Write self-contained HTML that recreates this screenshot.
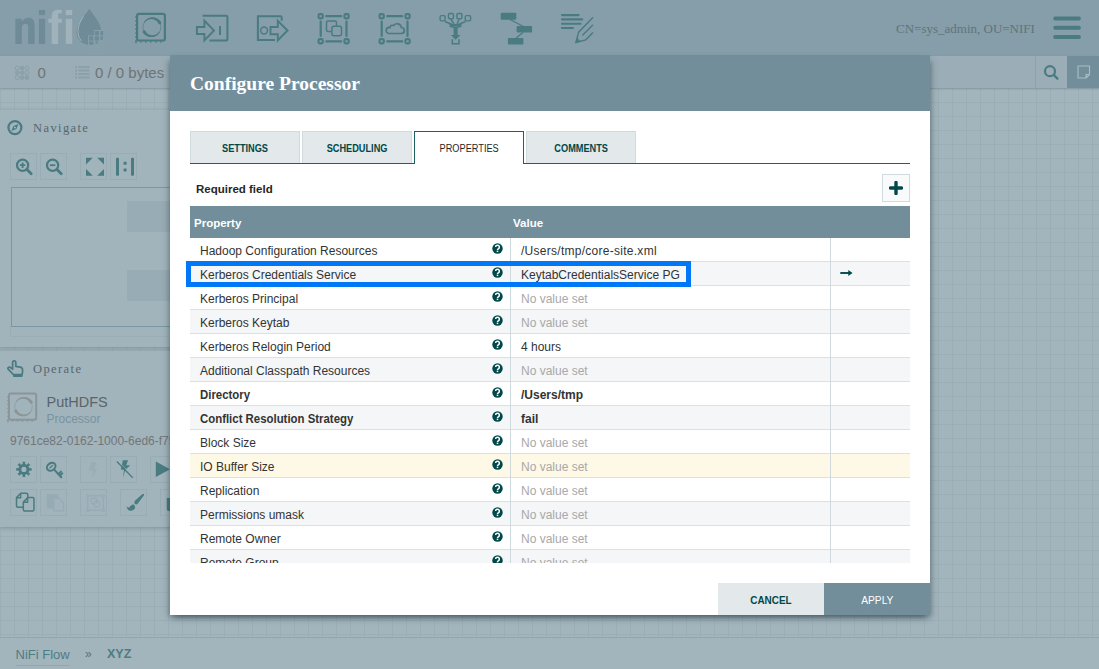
<!DOCTYPE html>
<html><head><meta charset="utf-8">
<style>
*{box-sizing:border-box;margin:0;padding:0}
html,body{width:1099px;height:669px;overflow:hidden}
body{position:relative;background:#a2b4bc;font-family:"Liberation Sans",sans-serif;color:#262626}
.abs{position:absolute}
#canvas{left:0;top:88px;width:1099px;height:549px;
 background-color:#a2b4bc;
 background-image:linear-gradient(to right,#9badb5 1px,transparent 1px),linear-gradient(to bottom,#9badb5 1px,transparent 1px);
 background-size:14px 14px;background-position:0 0}
#hdr{left:0;top:0;width:1099px;height:56px;background:#869ea9}
#tb{left:0;top:56px;width:1099px;height:32px;background:#9badb6;box-shadow:0 1px 2px rgba(60,80,90,0.25)}
#footer{left:0;top:637px;width:1099px;height:32px;background:#a2b4bc;border-top:1px solid #90a5ae}
.panel{background:#a1b3bb;box-shadow:0 1px 4px rgba(50,70,80,0.3)}
#dlg{left:170px;top:55px;width:760px;height:560px;background:#fff;box-shadow:-3px 4px 6px -2px rgba(40,60,70,0.5),3px 4px 6px -2px rgba(40,60,70,0.5)}
#dlghd{left:0;top:0;width:760px;height:56px;background:#728e9b}
#dlgtitle{left:20px;top:18px;font-family:"Liberation Serif",serif;font-weight:700;font-size:19.5px;color:#fff;white-space:nowrap}
.tab{top:76px;width:110px;height:32px;background:#e3e8eb;border:1px solid #cfdbdc;border-bottom:none;font-size:10px;font-weight:700;color:#004849;text-align:center;line-height:32px;z-index:2}
.tab span{display:inline-block;transform:scaleX(.92);line-height:10px;position:relative;top:1px}
.tab.act{background:#fff;border:1px solid #1d6163;border-bottom:none;color:#262626;font-weight:400;height:33px}
#tabline{left:20px;top:108px;width:720px;height:1px;background:#1d6163}
#reqf{left:26px;top:128px;font-size:11.5px;font-weight:700;color:#262626}
#addbtn{left:712px;top:119px;width:28px;height:28px;background:#f9fafb;border:1px solid #cfdbdc}
#thead{left:20px;top:151px;width:720px;height:32px;background:#728e9b;color:#fff;font-weight:700;font-size:11.5px}
#rows{left:20px;top:183px;width:720px;height:325px;overflow:hidden}
.row{position:relative;height:24px;border-bottom:1px solid #d9e1e5;font-size:12px;white-space:nowrap;color:#333}
.row.alt{background:#f4f6f7}
.row.warn{background:#fef9e6}
.row .n{position:absolute;left:10px;top:6px}
.row .v{position:absolute;left:331px;top:6px}
.row .nv{color:#a8a8a8}
.row .q{position:absolute;left:302px;top:5px;width:11px;height:11px}
.row .s1{position:absolute;left:320px;top:0;width:1px;height:24px;background:#cfd9de}
.row .s2{position:absolute;left:640px;top:0;width:1px;height:24px;background:#cfd9de}
.b{font-weight:700}
#btnc{left:548px;top:528px;width:106px;height:32px;background:#e3e8eb;color:#004849;font-weight:700;font-size:11px;text-align:center;line-height:34px}
#btnc span,#btna span{display:inline-block;transform:scaleX(.9)}
#btna{left:654px;top:528px;width:106px;height:32px;background:#728e9b;color:#fff;font-size:11px;text-align:center;line-height:34px}
#hl{left:186px;top:261px;width:505px;height:26px;border:5px solid #0077f7}
.ic{stroke:#497b81;fill:none}
.icf{fill:#497b81}
.pbtn{width:27px;height:27px;border:1px solid #98acb4}
</style></head><body>
<div id="canvas" class="abs"></div>
<div id="hdr" class="abs">
<svg class="abs" style="left:0;top:0" width="1099" height="55" viewBox="0 0 1099 55">
 <!-- logo -->
 <g fill="#6e8b97">
  <path d="M15.4 18.8h6.4v3.2c1.6-2.6 3.8-4.2 6.6-4.2 4.2 0 6.2 2.6 6.2 7.2v19h-6.4v-17c0-2-.8-3.2-2.6-3.2s-3.8 1.4-3.8 4v16.2h-6.4z"/>
  <rect x="38.9" y="18.8" width="6.2" height="25.1"/>
  <rect x="38.9" y="10" width="6.2" height="5.1"/>
 </g>
 <g fill="#a0b3bb">
  <path d="M51.7 43.9v-21.1h-3.3v-4h3.3v-2.6c0-4.5 2.6-6.5 6.6-6.5 1.4 0 2.6.1 3.5.3v3.5c-.6-.1-1.3-.2-2-.2-1.4 0-1.7.7-1.7 2.3v3.2h3.7v4h-3.7v21.1z"/>
  <rect x="65.8" y="18.8" width="6.4" height="25.1"/>
  <rect x="65.8" y="10" width="6.4" height="5.1"/>
 </g>
 <path d="M89.4 8.7C85 15 76.6 24 76.6 32.2c0 7 5.6 12.5 12.6 12.5s12.3-5.5 12.3-12.5C101.5 24 93.6 15 89.4 8.7z" fill="#6e8b97"/>
 <path d="M83.5 16.5C80 21.5 77.8 26.5 78 32.5c.2 3.6 1.6 6.4 3.6 8.4" stroke="#a6b8bf" stroke-width="0.9" fill="none"/>
 <g fill="#879fa9"><rect x="88" y="35.4" width="16" height="40"/><rect x="94" y="30" width="10" height="6"/></g>
 <g fill="#6e8b97"><rect x="94.8" y="31" width="4.2" height="4.3"/><rect x="100.4" y="31" width="2.8" height="4.3"/>
 <rect x="89" y="36.3" width="4.4" height="4.3"/><rect x="94.8" y="36.3" width="4.2" height="4.3"/><rect x="100.4" y="36.3" width="2.4" height="3.6"/>
 <rect x="89" y="41.5" width="4.4" height="3.2"/><rect x="95.5" y="41.5" width="2.5" height="2"/></g>
 <!-- processor -->
 <g transform="translate(136 12.8) scale(1)"><rect x="1.1" y="1.1" width="27.8" height="26.6" rx="2" stroke="#497b81" stroke-width="2.2" fill="none"/><rect x="-0.7" y="3.5" width="1" height="1.6" fill="#497b81"/><rect x="-0.7" y="7.5" width="1" height="1.6" fill="#497b81"/><rect x="-0.7" y="11.5" width="1" height="1.6" fill="#497b81"/><rect x="-0.7" y="15.5" width="1" height="1.6" fill="#497b81"/><rect x="-0.7" y="19.5" width="1" height="1.6" fill="#497b81"/><rect x="-0.7" y="23.5" width="1" height="1.6" fill="#497b81"/><rect x="-0.7" y="27" width="1.5" height="3.4" fill="#497b81"/><rect x="4" y="28.5" width="1.6" height="1.3" fill="#497b81"/><rect x="9" y="28.5" width="1.6" height="1.3" fill="#497b81"/><rect x="14" y="28.5" width="1.6" height="1.3" fill="#497b81"/><rect x="19" y="28.5" width="1.6" height="1.3" fill="#497b81"/><rect x="24" y="28.5" width="1.6" height="1.3" fill="#497b81"/><circle cx="15.9" cy="14.4" r="9.0" stroke="#497b81" stroke-width="0.6" fill="none"/><path d="M7.97 9.45 L8.39 8.76 L8.86 8.10 L9.40 7.49 L9.98 6.92 L10.62 6.40 L11.30 5.93 L12.03 5.52 L12.78 5.18 L13.58 4.90 L14.39 4.69 L15.23 4.55 L16.07 4.48 L16.93 4.48 L17.78 4.56 L18.63 4.71 L19.47 4.93 L20.29 5.23 L21.08 5.60 L21.85 6.04 L22.57 6.54 L23.25 7.11 L23.89 7.74 L24.47 8.42 L24.99 9.15 L22.40 10.65 L22.09 10.08 L21.73 9.53 L21.33 9.02 L20.88 8.54 L20.39 8.09 L19.85 7.69 L19.28 7.33 L18.68 7.02 L18.05 6.77 L17.40 6.56 L16.73 6.42 L16.04 6.33 L15.35 6.30 L14.65 6.33 L13.95 6.42 L13.25 6.57 L12.57 6.78 L11.91 7.05 L11.27 7.38 L10.65 7.77 L10.07 8.20 L9.53 8.69 L9.02 9.23 L8.56 9.82Z" fill="#497b81"/><circle cx="23.69" cy="9.90" r="1.50" fill="#497b81"/><path d="M23.83 19.35 L23.41 20.04 L22.94 20.70 L22.40 21.31 L21.82 21.88 L21.18 22.40 L20.50 22.87 L19.77 23.28 L19.02 23.62 L18.22 23.90 L17.41 24.11 L16.57 24.25 L15.73 24.32 L14.87 24.32 L14.02 24.24 L13.17 24.09 L12.33 23.87 L11.51 23.57 L10.72 23.20 L9.95 22.76 L9.23 22.26 L8.55 21.69 L7.91 21.06 L7.33 20.38 L6.81 19.65 L9.40 18.15 L9.71 18.72 L10.07 19.27 L10.47 19.78 L10.92 20.26 L11.41 20.71 L11.95 21.11 L12.52 21.47 L13.12 21.78 L13.75 22.03 L14.40 22.24 L15.07 22.38 L15.76 22.47 L16.45 22.50 L17.15 22.47 L17.85 22.38 L18.55 22.23 L19.23 22.02 L19.89 21.75 L20.53 21.42 L21.15 21.03 L21.73 20.60 L22.27 20.11 L22.78 19.57 L23.24 18.98Z" fill="#497b81"/><circle cx="8.11" cy="18.90" r="1.50" fill="#497b81"/></g>
 <!-- input port -->
 <path d="M202.5 15.7 L226.3 15.7 Q227.4 15.7 227.4 16.8 V39.5 Q227.4 40.6 226.3 40.6 H209.5" stroke="#497b81" stroke-width="2" fill="none"/>
 <path d="M196.9 27 H204.4 V20.6 L214 30.5 L204.4 40.5 V34 H196.9 Z" stroke="#497b81" stroke-width="1.9" fill="none" stroke-linejoin="miter"/>
 <rect x="219" y="26" width="2" height="9" class="icf"/>
 <!-- output port -->
 <path d="M275 40 H257.9 V16.2 H280.5 Q281.7 16.2 281.7 17.4 V20.8" stroke="#497b81" stroke-width="2" fill="none"/>
 <circle cx="264.1" cy="30.5" r="3.4" stroke="#497b81" stroke-width="1.5" fill="none"/>
 <path d="M270.5 27 H277.8 V20.8 L287.5 30.5 L277.8 40.5 V34.2 H270.5 Z" stroke="#497b81" stroke-width="1.9" fill="none"/>
 <!-- process group -->
 <g id="frame">
  <g stroke="#497b81" stroke-width="2.1" fill="none">
   <rect x="318.5" y="14.1" width="4.3" height="4.3" rx="1.3"/><rect x="344.4" y="14.1" width="4.3" height="4.3" rx="1.3"/>
   <rect x="318.5" y="39.1" width="4.3" height="4.3" rx="1.3"/><rect x="344.4" y="39.1" width="4.3" height="4.3" rx="1.3"/>
  </g>
  <g class="icf"><rect x="325.2" y="15.1" width="17" height="2.2" rx="1"/><rect x="325.2" y="40.2" width="17" height="2.2" rx="1"/><rect x="319.6" y="20.6" width="2.2" height="16.4" rx="1"/><rect x="345.4" y="20.6" width="2.2" height="16.4" rx="1"/></g>
 </g>
 <g stroke="#497b81" stroke-width="1.5" fill="none">
  <path d="M331.6 31.4 H328 Q326.5 31.4 326.5 29.9 V22.4 Q326.5 20.9 328 20.9 H335 Q336.5 20.9 336.5 22.4 V25.7"/>
  <rect x="331.9" y="26.2" width="9.6" height="9.6" rx="2"/>
 </g>
 <!-- remote pg -->
 <use href="#frame" x="61"/>
 <path d="M388.5 33.5 H401.3 A3 3 0 0 0 401.3 27.5 A4.3 4.3 0 0 0 393.6 25.5 A2.6 2.6 0 0 0 389.9 27.6 A3 3 0 0 0 388.5 33.5 Z" stroke="#497b81" stroke-width="1.7" fill="none"/>
 <!-- funnel -->
 <g stroke="#497b81" stroke-width="1.4" fill="none">
  <rect x="440.1" y="15.6" width="5" height="5.3" rx="1.3"/><rect x="448.5" y="13.5" width="5" height="5.3" rx="1.3"/>
  <rect x="456.9" y="13.5" width="5" height="5.3" rx="1.3"/><rect x="465.2" y="15.6" width="5.4" height="5.3" rx="1.3"/>
  <path d="M445 21.5 L452 24.5 M451 19.5 L454 24 M459 19.5 L457 24 M465.5 21.5 L458.5 24.5"/>
  <path d="M449.5 26 Q455.5 28.5 461.5 26" stroke-width="1.4"/>
  <path d="M452.3 39.2 V43.7 H459 V39.2" stroke-width="1.5"/>
 </g>
 <path d="M449 24 H462 L460 26.2 H451 Z" class="icf"/>
 <path d="M453.6 27.8 H457.6 V35 H460.6 L455.6 39.7 L450.8 35 H453.6 Z" class="icf"/>
 <!-- template -->
 <g class="icf"><rect x="500.7" y="12.8" width="15.6" height="6.9" rx="1"/><rect x="516.6" y="26" width="15.5" height="6.6" rx="1"/><rect x="507.9" y="37.9" width="15.5" height="6.6" rx="1"/></g>
 <path d="M510 19.5 L523 26.2 M523 32.5 L516 38" stroke="#497b81" stroke-width="1.2"/>
 <!-- label -->
 <g stroke="#497b81" stroke-width="2.1" stroke-linecap="round"><path d="M562 15.1H578.6M562 19.4H582.2M562 23.7H580.5M562 28H573"/></g>
 <g stroke="#497b81" stroke-width="1.4" fill="none" stroke-linecap="round">
  <path d="M592.6 17.8 L578.6 32.2 L576 42.5 L585.8 39.8 L592.6 32.8"/>
  <path d="M592.6 25.3 L582.8 35"/>
 </g>
 <path d="M575.3 43 L576.8 37.5 L580.6 41.4 Z" class="icf"/>
 <!-- user -->
 <text x="896" y="33" font-family="Liberation Serif" font-size="13" fill="#5f7479">CN=sys_admin, OU=NIFI</text>
 <g class="icf"><rect x="1053.3" y="16.5" width="27.5" height="4" rx="1.8"/><rect x="1053.3" y="25.7" width="27.5" height="4" rx="1.8"/><rect x="1053.3" y="35" width="27.5" height="4" rx="1.8"/></g>
</svg></div>
<div id="tb" class="abs">
<svg class="abs" style="left:0;top:0" width="1099" height="32" viewBox="0 56 1099 32">
 <g fill="none" stroke="#8aa0aa" stroke-width="1"><circle cx="17.2" cy="68" r="2"/><circle cx="27" cy="68" r="2"/><circle cx="27" cy="72.8" r="2"/><circle cx="17.2" cy="77.6" r="2"/></g>
 <g fill="#8aa0aa"><circle cx="22.1" cy="68" r="2.3"/><circle cx="17.2" cy="72.8" r="2.3"/><circle cx="22.1" cy="72.8" r="2.3"/><circle cx="22.1" cy="77.6" r="2.3"/><circle cx="27" cy="77.6" r="2.3"/></g>
 <g fill="#8aa0aa"><rect x="75" y="66" width="2" height="2"/><rect x="75" y="69.5" width="2" height="2"/><rect x="75" y="73" width="2" height="2"/><rect x="75" y="76.5" width="2" height="2"/>
 <rect x="78.5" y="66" width="11" height="2"/><rect x="78.5" y="69.5" width="11" height="2"/><rect x="78.5" y="73" width="11" height="2"/><rect x="78.5" y="76.5" width="11" height="2"/></g>
 <text x="37.5" y="78.3" font-family="Liberation Sans" font-size="15" fill="#6f7377">0</text>
 <text x="95" y="78.3" font-family="Liberation Sans" font-size="15" fill="#6f7377">0 / 0 bytes</text>
 <rect x="1035" y="56" width="1" height="32" fill="#8fa3ac"/>
 <rect x="1067" y="56" width="32" height="32" fill="#728e9b"/>
 <circle cx="1050" cy="71.2" r="5" stroke="#497b81" stroke-width="2.2" fill="none"/>
 <path d="M1053.8 75 L1057.4 78.6" stroke="#497b81" stroke-width="2.4" stroke-linecap="round"/>
 <path d="M1078 66 H1089.5 V74.5 L1086 78 H1078 Z M1089.5 74.5 H1086 V78" stroke="#a9bbc2" stroke-width="1.2" fill="none" stroke-linejoin="round"/>
</svg></div>
<div id="footer" class="abs">
 <span class="abs" style="left:15.5px;top:9px;font-size:13px;color:#4d7d84">NiFi Flow</span>
 <div class="abs" style="left:15.5px;top:27px;width:54px;height:1px;background:#8fa7af"></div>
 <span class="abs" style="left:85px;top:9px;font-size:12px;color:#5b6f75">&raquo;</span>
 <span class="abs" style="left:107px;top:9px;font-size:12.5px;font-weight:700;color:#4d7d84">XYZ</span>
</div>
<div id="nav" class="abs panel" style="left:0;top:110px;width:190px;height:237px">
 <svg class="abs" style="left:0;top:0" width="190" height="228" viewBox="0 110 190 228">
  <circle cx="14.9" cy="127.6" r="6.5" stroke="#497b81" stroke-width="2.2" fill="none"/>
  <path d="M18.4 124.1 L16.4 129.1 L11.4 131.1 L13.4 126.1 Z" class="icf"/><circle cx="14.9" cy="127.6" r="1" fill="#a1b3bb"/>
  <text x="33" y="132.3" font-family="Liberation Serif" font-size="12.5" letter-spacing="1.4" fill="#55686e">Navigate</text>
  <g stroke="#497b81" fill="none">
   <circle cx="22.6" cy="165.2" r="5.6" stroke-width="2.2"/>
   <path d="M19.9 165.2h5.4M22.6 162.5v5.4" stroke-width="1.8"/>
   <path d="M27 169.6 L31.2 173.8" stroke-width="2.8" stroke-linecap="round"/>
   <circle cx="52.6" cy="165.2" r="5.6" stroke-width="2.2"/>
   <path d="M49.9 165.2h5.4" stroke-width="1.8"/>
   <path d="M57 169.6 L61.2 173.8" stroke-width="2.8" stroke-linecap="round"/>
  </g>
  <g class="icf">
   <path d="M86 157.8h6.8l-6.8 6.8z M104 157.8v6.8l-6.8-6.8z M86 175.8v-6.8l6.8 6.8z M104 175.8h-6.8l6.8-6.8z"/>
   <rect x="116" y="157.8" width="3" height="18" rx="1"/><rect x="131" y="157.8" width="3" height="18" rx="1"/>
   <rect x="123.6" y="161.8" width="3" height="3" rx=".6"/><rect x="123.6" y="168.4" width="3" height="3" rx=".6"/>
  </g>
 </svg>
 <div class="abs pbtn" style="left:10px;top:43px"></div><div class="abs pbtn" style="left:40px;top:43px"></div><div class="abs pbtn" style="left:80px;top:43px"></div><div class="abs pbtn" style="left:110px;top:43px"></div>
 <div class="abs" style="left:11px;top:77px;width:179px;height:140px;border:1.5px solid #7b97a3"></div>
 <div class="abs" style="left:127px;top:91px;width:63px;height:31px;background:#98acb5"></div>
 <div class="abs" style="left:127px;top:160px;width:63px;height:31px;background:#98acb5"></div>
 <div class="abs" style="left:10px;top:216px;width:180px;height:11px;border:1px solid #9aaeb6;border-top:none"></div>
</div>
<div id="op" class="abs panel" style="left:0;top:351px;width:190px;height:176px">
 <svg class="abs" style="left:0;top:0" width="190" height="176" viewBox="0 351 190 176">
  <path d="M13.3 374.5 L8.2 369.2 Q7.2 367.8 8.8 367.2 Q10 366.9 11.4 368.2 L12.6 369.2 V362.6 Q12.6 360.8 14.2 360.8 Q15.8 360.8 15.8 362.6 V366.4 L20.3 367.2 Q22.8 367.8 22.6 370.6 L22.2 374.5 Z" stroke="#497b81" stroke-width="1.7" fill="none" stroke-linejoin="round"/>
  <rect x="13" y="374.2" width="9.6" height="2.8" rx=".8" class="icf"/>
  <text x="33" y="373" font-family="Liberation Serif" font-size="12.5" letter-spacing="1.4" fill="#55686e">Operate</text>
  <g transform="translate(7.9 392.5) scale(0.98)"><rect x="1.1" y="1.1" width="27.8" height="26.6" rx="2" stroke="#8b9598" stroke-width="2.0" fill="none"/><rect x="-0.7" y="3.5" width="1" height="1.6" fill="#8b9598"/><rect x="-0.7" y="7.5" width="1" height="1.6" fill="#8b9598"/><rect x="-0.7" y="11.5" width="1" height="1.6" fill="#8b9598"/><rect x="-0.7" y="15.5" width="1" height="1.6" fill="#8b9598"/><rect x="-0.7" y="19.5" width="1" height="1.6" fill="#8b9598"/><rect x="-0.7" y="23.5" width="1" height="1.6" fill="#8b9598"/><rect x="-0.7" y="27" width="1.5" height="3.4" fill="#8b9598"/><rect x="4" y="28.5" width="1.6" height="1.3" fill="#8b9598"/><rect x="9" y="28.5" width="1.6" height="1.3" fill="#8b9598"/><rect x="14" y="28.5" width="1.6" height="1.3" fill="#8b9598"/><rect x="19" y="28.5" width="1.6" height="1.3" fill="#8b9598"/><rect x="24" y="28.5" width="1.6" height="1.3" fill="#8b9598"/><circle cx="15.9" cy="14.4" r="9.0" stroke="#8b9598" stroke-width="0.6" fill="none"/><path d="M7.97 9.45 L8.39 8.76 L8.86 8.10 L9.40 7.49 L9.98 6.92 L10.62 6.40 L11.30 5.93 L12.03 5.52 L12.78 5.18 L13.58 4.90 L14.39 4.69 L15.23 4.55 L16.07 4.48 L16.93 4.48 L17.78 4.56 L18.63 4.71 L19.47 4.93 L20.29 5.23 L21.08 5.60 L21.85 6.04 L22.57 6.54 L23.25 7.11 L23.89 7.74 L24.47 8.42 L24.99 9.15 L22.40 10.65 L22.09 10.08 L21.73 9.53 L21.33 9.02 L20.88 8.54 L20.39 8.09 L19.85 7.69 L19.28 7.33 L18.68 7.02 L18.05 6.77 L17.40 6.56 L16.73 6.42 L16.04 6.33 L15.35 6.30 L14.65 6.33 L13.95 6.42 L13.25 6.57 L12.57 6.78 L11.91 7.05 L11.27 7.38 L10.65 7.77 L10.07 8.20 L9.53 8.69 L9.02 9.23 L8.56 9.82Z" fill="#8b9598"/><circle cx="23.69" cy="9.90" r="1.50" fill="#8b9598"/><path d="M23.83 19.35 L23.41 20.04 L22.94 20.70 L22.40 21.31 L21.82 21.88 L21.18 22.40 L20.50 22.87 L19.77 23.28 L19.02 23.62 L18.22 23.90 L17.41 24.11 L16.57 24.25 L15.73 24.32 L14.87 24.32 L14.02 24.24 L13.17 24.09 L12.33 23.87 L11.51 23.57 L10.72 23.20 L9.95 22.76 L9.23 22.26 L8.55 21.69 L7.91 21.06 L7.33 20.38 L6.81 19.65 L9.40 18.15 L9.71 18.72 L10.07 19.27 L10.47 19.78 L10.92 20.26 L11.41 20.71 L11.95 21.11 L12.52 21.47 L13.12 21.78 L13.75 22.03 L14.40 22.24 L15.07 22.38 L15.76 22.47 L16.45 22.50 L17.15 22.47 L17.85 22.38 L18.55 22.23 L19.23 22.02 L19.89 21.75 L20.53 21.42 L21.15 21.03 L21.73 20.60 L22.27 20.11 L22.78 19.57 L23.24 18.98Z" fill="#8b9598"/><circle cx="8.11" cy="18.90" r="1.50" fill="#8b9598"/></g>
  <text x="46.5" y="406.5" font-family="Liberation Sans" font-size="14.5" fill="#5b6569">PutHDFS</text>
  <text x="46.5" y="423" font-family="Liberation Sans" font-size="12" fill="#7893a0">Processor</text>
  <text x="10" y="444.7" font-family="Liberation Sans" font-size="12" fill="#727679">9761ce82-0162-1000-6ed6-f75</text>
 </svg>
 <div class="abs pbtn" style="left:10px;top:105px"></div><div class="abs pbtn" style="left:40px;top:105px"></div><div class="abs pbtn" style="left:80px;top:105px"></div><div class="abs pbtn" style="left:110px;top:105px"></div><div class="abs pbtn" style="left:150px;top:105px"></div>
 <div class="abs pbtn" style="left:10px;top:138px"></div><div class="abs pbtn" style="left:40px;top:138px"></div><div class="abs pbtn" style="left:80px;top:138px"></div><div class="abs pbtn" style="left:120px;top:138px"></div><div class="abs pbtn" style="left:160px;top:138px"></div>
 <svg class="abs" style="left:0;top:0" width="190" height="176" viewBox="0 351 190 176">
  <path d="M28.83 467.20 L29.38 468.24 L31.58 468.05 L31.58 470.75 L29.38 470.56 L28.83 471.60 L28.94 471.34 L28.60 472.45 L30.29 473.87 L28.37 475.79 L26.95 474.10 L25.84 474.44 L26.10 474.33 L25.06 474.88 L25.25 477.08 L22.55 477.08 L22.74 474.88 L21.70 474.33 L21.96 474.44 L20.85 474.10 L19.43 475.79 L17.51 473.87 L19.20 472.45 L18.86 471.34 L18.97 471.60 L18.42 470.56 L16.22 470.75 L16.22 468.05 L18.42 468.24 L18.97 467.20 L18.86 467.46 L19.20 466.35 L17.51 464.93 L19.43 463.01 L20.85 464.70 L21.96 464.36 L21.70 464.47 L22.74 463.92 L22.55 461.72 L25.25 461.72 L25.06 463.92 L26.10 464.47 L25.84 464.36 L26.95 464.70 L28.37 463.01 L30.29 464.93 L28.60 466.35 L28.94 467.46Z M26.50 469.4 A2.6 2.6 0 1 0 21.30 469.4 A2.6 2.6 0 1 0 26.50 469.4Z" class="icf" fill-rule="evenodd"/>
  <ellipse cx="51.2" cy="466.8" rx="4.6" ry="3.6" transform="rotate(-35 51.2 466.8)" stroke="#497b81" stroke-width="2" fill="none"/>
  <path d="M49.6 468.3 L52.8 465.3" stroke="#497b81" stroke-width="1.2"/>
  <path d="M54.2 469.6 L61.3 477.3 M58.3 474.2 L60.9 471.6 M59.8 475.9 L62.3 473.4" stroke="#497b81" stroke-width="2" stroke-linecap="round"/>
  <path d="M91.5 462 H96.5 L94 468.5 H97.5 L92 478 L93.2 470.5 H89 Z" fill="#99adb5"/>
  <path d="M122.8 460.3 H128 L126.2 465.2 L130.3 465.6 L125.4 469.5 L123 478 L124 469.8 L120.7 469.5 L121.8 466 Z" class="icf"/>
  <path d="M116.9 461.5 L132.7 477.8" stroke="#497b81" stroke-width="1.3"/>
  <path d="M117.5 462.5 L132.5 478" stroke="#a1b3bb" stroke-width="0.6" transform="translate(1.2 -1.1)"/>
  <path d="M155.8 461.5 L170 469.3 L155.8 477 Z" class="icf"/>
  <g stroke="#497b81" stroke-width="1.5" fill="none" stroke-linejoin="round">
   <path d="M23.5 507.3 H18 Q16.5 507.3 16.5 505.8 V497.5 L20.8 493.3 H26.3 Q27.8 493.3 27.8 494.8 V498"/>
   <path d="M16.8 497.8 H20.6 V493.5"/>
   <path d="M23.3 502.1 L27.8 497.6 H32.5 Q34 497.6 34 499.1 V509.4 Q34 510.9 32.5 510.9 H24.8 Q23.3 510.9 23.3 509.4 Z"/>
   <path d="M23.5 502.3 H27.6 V497.9"/>
  </g>
  <rect x="46.7" y="493.9" width="11.6" height="14.7" rx="1" fill="#96abb3"/>
  <path d="M53.8 498.4 H58.8 L63.6 503.2 V510.9 H53.8 Z" fill="#a1b3bb" stroke="#96abb3" stroke-width="1.2"/>
  <g stroke="#94a9b1" stroke-width="1" fill="none">
   <rect x="86.6" y="494.6" width="2.4" height="2.4" rx=".6"/><rect x="102" y="494.6" width="2.4" height="2.4" rx=".6"/>
   <rect x="86.6" y="509" width="2.4" height="2.4" rx=".6"/><rect x="102" y="509" width="2.4" height="2.4" rx=".6"/>
   <path d="M89.6 495.8 H101.4 M89.6 510.2 H101.4 M87.8 497.6 V508.4 M103.2 497.6 V508.4"/>
   <rect x="91.2" y="498.2" width="5.6" height="5.6" rx="1.2"/><rect x="94" y="501.2" width="5.6" height="5.6" rx="1.2"/>
  </g>
  <path d="M142.2 494.3 Q144.5 492.8 143.8 495.4 L137.8 503.6 Q136.2 505.2 134.7 503.8 L134.5 503.4 Q133.9 502 135.2 500.6 Z" class="icf"/>
  <path d="M133.2 504.2 Q135.8 505.6 134.8 508.5 Q133 511.2 129.6 510.7 Q127.2 510 126.3 506.3 Q127.8 508 129.3 507.4 Q130 505.5 133.2 504.2 Z" class="icf"/>
  <path d="M166.8 498 H171 V511 H168.6 Q166.8 511 166.8 509 Z" class="icf"/>
 </svg>
</div>
<div id="dlg" class="abs">
 <div id="dlghd" class="abs"><div id="dlgtitle" class="abs">Configure Processor</div></div>
 <div class="tab abs" style="left:20px"><span>SETTINGS</span></div>
 <div class="tab abs" style="left:132px"><span>SCHEDULING</span></div>
 <div class="tab act abs" style="left:244px"><span>PROPERTIES</span></div>
 <div class="tab abs" style="left:356px"><span>COMMENTS</span></div>
 <div id="tabline" class="abs"></div>

 <div id="reqf" class="abs">Required field</div>
 <div id="addbtn" class="abs"><svg class="abs" style="left:6px;top:6px" width="14" height="14" viewBox="0 0 14 14"><path d="M7 1.5v11M1.5 7h11" stroke="#004849" stroke-width="3.4" stroke-linecap="round"/></svg></div>
 <div id="thead" class="abs"><span class="abs" style="left:4px;top:11px">Property</span><span class="abs" style="left:323px;top:11px">Value</span></div>
 <div id="rows" class="abs">
<div class="row"><span class="n">Hadoop Configuration Resources</span><svg class="q" viewBox="0 0 11 11"><circle cx="5.5" cy="5.5" r="5.2" fill="#004849"/><path d="M3.6 4.1a1.9 1.9 0 1 1 2.7 1.7c-.5.3-.8.5-.8 1.1" stroke="#fff" stroke-width="1.5" fill="none"/><rect x="4.75" y="7.6" width="1.5" height="1.5" fill="#fff"/></svg><div class="s1"></div><span class="v" style="letter-spacing:.27px">/Users/tmp/core-site.xml</span><div class="s2"></div></div>
<div class="row alt"><span class="n">Kerberos Credentials Service</span><svg class="q" viewBox="0 0 11 11"><circle cx="5.5" cy="5.5" r="5.2" fill="#004849"/><path d="M3.6 4.1a1.9 1.9 0 1 1 2.7 1.7c-.5.3-.8.5-.8 1.1" stroke="#fff" stroke-width="1.5" fill="none"/><rect x="4.75" y="7.6" width="1.5" height="1.5" fill="#fff"/></svg><div class="s1"></div><span class="v">KeytabCredentialsService PG</span><div class="s2"></div><svg class="abs" style="left:650px;top:6.5px" width="13" height="8" viewBox="0 0 13 8"><path d="M0.3 4h9" stroke="#004849" stroke-width="1.9"/><path d="M8.3 1l4.2 3-4.2 3z" fill="#004849"/></svg></div>
<div class="row"><span class="n">Kerberos Principal</span><svg class="q" viewBox="0 0 11 11"><circle cx="5.5" cy="5.5" r="5.2" fill="#004849"/><path d="M3.6 4.1a1.9 1.9 0 1 1 2.7 1.7c-.5.3-.8.5-.8 1.1" stroke="#fff" stroke-width="1.5" fill="none"/><rect x="4.75" y="7.6" width="1.5" height="1.5" fill="#fff"/></svg><div class="s1"></div><span class="v nv">No value set</span><div class="s2"></div></div>
<div class="row alt"><span class="n">Kerberos Keytab</span><svg class="q" viewBox="0 0 11 11"><circle cx="5.5" cy="5.5" r="5.2" fill="#004849"/><path d="M3.6 4.1a1.9 1.9 0 1 1 2.7 1.7c-.5.3-.8.5-.8 1.1" stroke="#fff" stroke-width="1.5" fill="none"/><rect x="4.75" y="7.6" width="1.5" height="1.5" fill="#fff"/></svg><div class="s1"></div><span class="v nv">No value set</span><div class="s2"></div></div>
<div class="row"><span class="n">Kerberos Relogin Period</span><svg class="q" viewBox="0 0 11 11"><circle cx="5.5" cy="5.5" r="5.2" fill="#004849"/><path d="M3.6 4.1a1.9 1.9 0 1 1 2.7 1.7c-.5.3-.8.5-.8 1.1" stroke="#fff" stroke-width="1.5" fill="none"/><rect x="4.75" y="7.6" width="1.5" height="1.5" fill="#fff"/></svg><div class="s1"></div><span class="v">4 hours</span><div class="s2"></div></div>
<div class="row alt"><span class="n">Additional Classpath Resources</span><svg class="q" viewBox="0 0 11 11"><circle cx="5.5" cy="5.5" r="5.2" fill="#004849"/><path d="M3.6 4.1a1.9 1.9 0 1 1 2.7 1.7c-.5.3-.8.5-.8 1.1" stroke="#fff" stroke-width="1.5" fill="none"/><rect x="4.75" y="7.6" width="1.5" height="1.5" fill="#fff"/></svg><div class="s1"></div><span class="v nv">No value set</span><div class="s2"></div></div>
<div class="row"><span class="n b" style="transform:scaleX(.95);transform-origin:0 0">Directory</span><svg class="q" viewBox="0 0 11 11"><circle cx="5.5" cy="5.5" r="5.2" fill="#004849"/><path d="M3.6 4.1a1.9 1.9 0 1 1 2.7 1.7c-.5.3-.8.5-.8 1.1" stroke="#fff" stroke-width="1.5" fill="none"/><rect x="4.75" y="7.6" width="1.5" height="1.5" fill="#fff"/></svg><div class="s1"></div><span class="v b">/Users/tmp</span><div class="s2"></div></div>
<div class="row alt"><span class="n b" style="transform:scaleX(.95);transform-origin:0 0">Conflict Resolution Strategy</span><svg class="q" viewBox="0 0 11 11"><circle cx="5.5" cy="5.5" r="5.2" fill="#004849"/><path d="M3.6 4.1a1.9 1.9 0 1 1 2.7 1.7c-.5.3-.8.5-.8 1.1" stroke="#fff" stroke-width="1.5" fill="none"/><rect x="4.75" y="7.6" width="1.5" height="1.5" fill="#fff"/></svg><div class="s1"></div><span class="v b">fail</span><div class="s2"></div></div>
<div class="row"><span class="n">Block Size</span><svg class="q" viewBox="0 0 11 11"><circle cx="5.5" cy="5.5" r="5.2" fill="#004849"/><path d="M3.6 4.1a1.9 1.9 0 1 1 2.7 1.7c-.5.3-.8.5-.8 1.1" stroke="#fff" stroke-width="1.5" fill="none"/><rect x="4.75" y="7.6" width="1.5" height="1.5" fill="#fff"/></svg><div class="s1"></div><span class="v nv">No value set</span><div class="s2"></div></div>
<div class="row warn"><span class="n">IO Buffer Size</span><svg class="q" viewBox="0 0 11 11"><circle cx="5.5" cy="5.5" r="5.2" fill="#004849"/><path d="M3.6 4.1a1.9 1.9 0 1 1 2.7 1.7c-.5.3-.8.5-.8 1.1" stroke="#fff" stroke-width="1.5" fill="none"/><rect x="4.75" y="7.6" width="1.5" height="1.5" fill="#fff"/></svg><div class="s1"></div><span class="v nv">No value set</span><div class="s2"></div></div>
<div class="row"><span class="n">Replication</span><svg class="q" viewBox="0 0 11 11"><circle cx="5.5" cy="5.5" r="5.2" fill="#004849"/><path d="M3.6 4.1a1.9 1.9 0 1 1 2.7 1.7c-.5.3-.8.5-.8 1.1" stroke="#fff" stroke-width="1.5" fill="none"/><rect x="4.75" y="7.6" width="1.5" height="1.5" fill="#fff"/></svg><div class="s1"></div><span class="v nv">No value set</span><div class="s2"></div></div>
<div class="row alt"><span class="n">Permissions umask</span><svg class="q" viewBox="0 0 11 11"><circle cx="5.5" cy="5.5" r="5.2" fill="#004849"/><path d="M3.6 4.1a1.9 1.9 0 1 1 2.7 1.7c-.5.3-.8.5-.8 1.1" stroke="#fff" stroke-width="1.5" fill="none"/><rect x="4.75" y="7.6" width="1.5" height="1.5" fill="#fff"/></svg><div class="s1"></div><span class="v nv">No value set</span><div class="s2"></div></div>
<div class="row"><span class="n">Remote Owner</span><svg class="q" viewBox="0 0 11 11"><circle cx="5.5" cy="5.5" r="5.2" fill="#004849"/><path d="M3.6 4.1a1.9 1.9 0 1 1 2.7 1.7c-.5.3-.8.5-.8 1.1" stroke="#fff" stroke-width="1.5" fill="none"/><rect x="4.75" y="7.6" width="1.5" height="1.5" fill="#fff"/></svg><div class="s1"></div><span class="v nv">No value set</span><div class="s2"></div></div>
<div class="row alt"><span class="n">Remote Group</span><svg class="q" viewBox="0 0 11 11"><circle cx="5.5" cy="5.5" r="5.2" fill="#004849"/><path d="M3.6 4.1a1.9 1.9 0 1 1 2.7 1.7c-.5.3-.8.5-.8 1.1" stroke="#fff" stroke-width="1.5" fill="none"/><rect x="4.75" y="7.6" width="1.5" height="1.5" fill="#fff"/></svg><div class="s1"></div><span class="v nv">No value set</span><div class="s2"></div></div>
 </div>
 <div id="btnc" class="abs"><span>CANCEL</span></div>
 <div id="btna" class="abs"><span style="transform:scaleX(.93)">APPLY</span></div>
</div>
<div id="hl" class="abs"></div>
</body></html>
